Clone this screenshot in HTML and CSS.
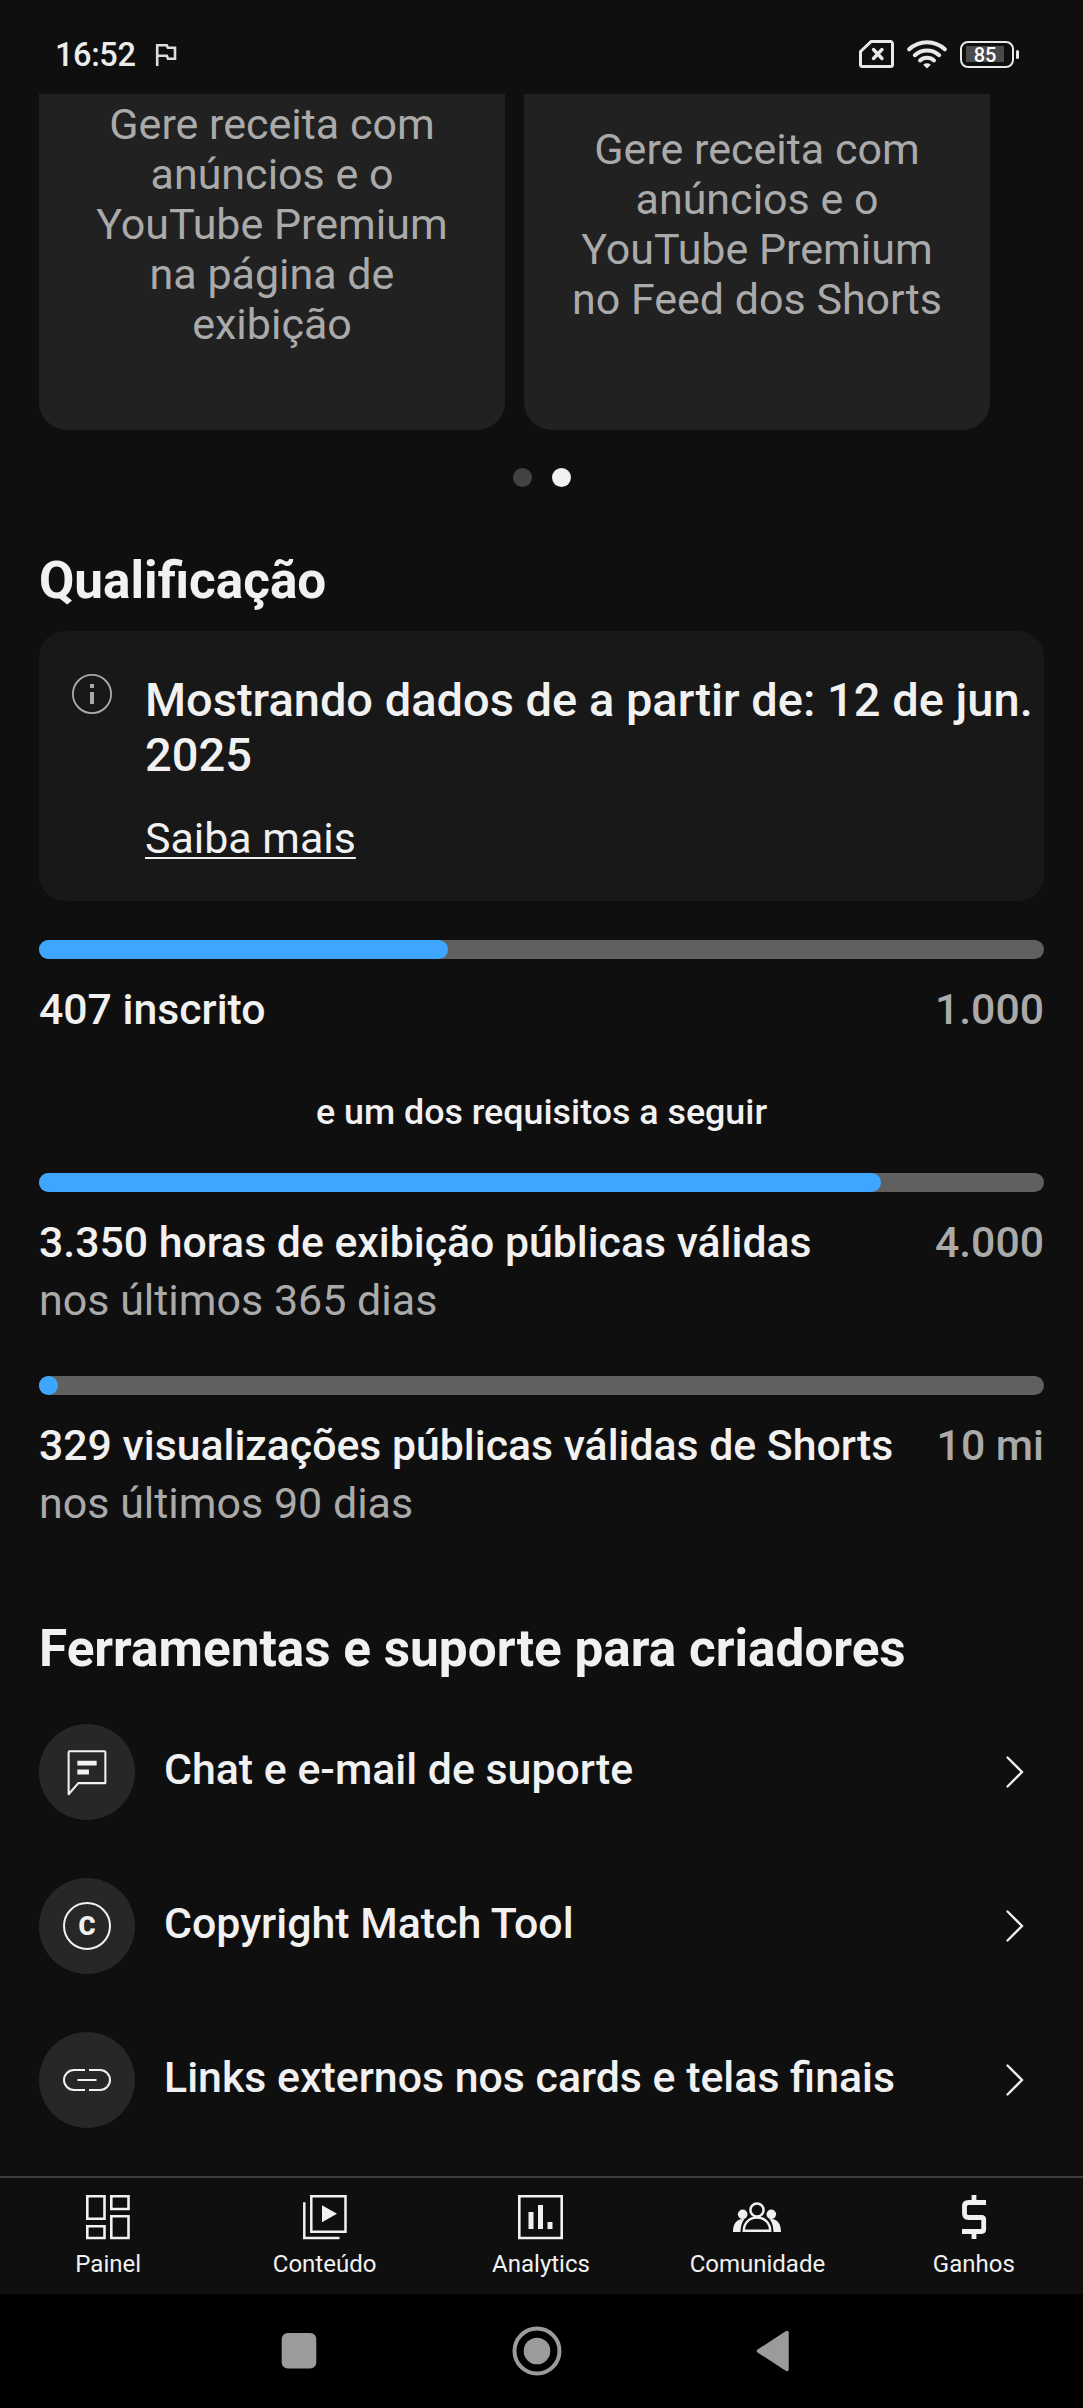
FILE: index.html
```html
<!DOCTYPE html>
<html lang="pt-BR">
<head>
<meta charset="utf-8">
<title>Ganhos</title>
<link rel="stylesheet" href="styles.css">
</head>
<body>
<div class="phone">
  <header class="status">
    <span class="clock">16:52</span>
    <svg class="flag" width="22" height="24" viewBox="0 0 22 24"><path d="M2.200 23V2.200h9.500l1.200 2.600H20v11h-7l-1.200-3H2.200" fill="none" stroke="#ddd" stroke-width="2.600"/></svg>
    <div class="status-right">
      <svg width="35" height="28" viewBox="0 0 35 28"><path d="M12 1.600h19.500a2 2 0 0 1 2 2v20.800a2 2 0 0 1-2 2h-28a2 2 0 0 1-2-2V11.500z" fill="none" stroke="#e8e8e8" stroke-width="3" stroke-linejoin="round"/><path d="M14.500 9.500l8.500 9M23 9.500l-8.500 9" stroke="#e8e8e8" stroke-width="3.400" stroke-linecap="round"/></svg>
      <svg class="wifi" width="40" height="30" viewBox="0 0 40 30" fill="none" stroke="#e8e8e8" stroke-width="4" stroke-linecap="round"><path d="M2.200 10.300a26 26 0 0 1 35.600 0"/><path d="M7.800 16.200a18 18 0 0 1 24.400 0" /><path d="M13 21.500a10.500 10.500 0 0 1 14 0"/><path d="M20 29.500l-3.800-3.800q3.800-2.800 7.600 0z" fill="#e8e8e8" stroke="none"/></svg>
      <div class="battery"><div class="battery-body"><span class="battery-level">85</span></div><i class="battery-tip"></i></div>
    </div>
  </header>

  <main class="content">
    <section class="cards">
      <p class="card">Gere receita com<br>anúncios e o<br>YouTube Premium<br>na página de<br>exibição</p>
      <p class="card card-short">Gere receita com<br>anúncios e o<br>YouTube Premium<br>no Feed dos Shorts</p>
    </section>
    <div class="dots"><i class="dot"></i><i class="dot dot-active"></i></div>

    <h2 class="title">Qualificação</h2>
    <section class="notice">
      <svg class="info" width="40" height="40" viewBox="0 0 40 40"><circle cx="20" cy="20" r="19.100" fill="none" stroke="#aaa" stroke-width="1.800"/><path d="M18 10h4v4h-4zM18 18h4v12h-4z" fill="#aaa"/></svg>
      <div>
        <p class="notice-title">Mostrando dados de a partir de: 12 de jun. 2025</p>
        <a class="notice-link">Saiba mais</a>
      </div>
    </section>

    <section class="goal">
      <div class="bar"><div class="fill" style="width:40.7%"></div></div>
      <div class="goal-row"><span>407 inscrito</span><span class="target">1.000</span></div>
    </section>
    <p class="either">e um dos requisitos a seguir</p>
    <section class="goal">
      <div class="bar"><div class="fill" style="width:83.75%"></div></div>
      <div class="goal-row"><span>3.350 horas de exibição públicas válidas</span><span class="target">4.000</span></div>
      <p class="period">nos últimos 365 dias</p>
    </section>
    <section class="goal goal-next">
      <div class="bar"><div class="fill" style="width:0.003%"></div></div>
      <div class="goal-row"><span>329 visualizações públicas válidas de Shorts</span><span class="target">10 mi</span></div>
      <p class="period">nos últimos 90 dias</p>
    </section>

    <h2 class="title title-tools">Ferramentas e suporte para criadores</h2>
    <ul class="tools">
      <li class="tool">
        <span class="disc"><svg width="58" height="58" viewBox="0 0 24 24" fill="none" stroke="#f1f1f1" stroke-width=".85"><path d="M4.400 21.200V3.800q0-.4.400-.4h14.400q.4 0 .4.400v12.800H8.400z" stroke-linejoin="round"/><path d="M8 8.300h8M8 12h4.800" stroke-width="2"/></svg></span>
        <span class="tool-name">Chat e e-mail de suporte</span>
        <svg class="chevron" width="18" height="32" viewBox="0 0 18 32"><path d="M1.500 1.500L16 16 1.500 30.500"/></svg>
      </li>
      <li class="tool">
        <span class="disc"><span class="copyright">C</span></span>
        <span class="tool-name">Copyright Match Tool</span>
        <svg class="chevron" width="18" height="32" viewBox="0 0 18 32"><path d="M1.500 1.500L16 16 1.500 30.500"/></svg>
      </li>
      <li class="tool">
        <span class="disc"><svg width="48" height="22" viewBox="0 0 48 22" fill="none" stroke="#f1f1f1" stroke-width="2"><path d="M22 1H11a10 10 0 0 0 0 20h11M26 1h11a10 10 0 0 1 0 20H26M14.500 11h19"/></svg></span>
        <span class="tool-name">Links externos nos cards e telas finais</span>
        <svg class="chevron" width="18" height="32" viewBox="0 0 18 32"><path d="M1.500 1.500L16 16 1.500 30.500"/></svg>
      </li>
    </ul>
  </main>

  <nav class="tabs">
    <a class="tab"><svg width="48" height="46" viewBox="0 0 48 46" fill="none" stroke="#f1f1f1" stroke-width="2.600"><path d="M3.300 2.300h17.200v22.400H3.300zM27.300 2.300h17.200v12.700H27.300zM3.300 32.300h17.200v11.700H3.300zM27.300 22.300h17.200v21.700H27.300z"/></svg><span>Painel</span></a>
    <a class="tab"><svg width="48" height="46" viewBox="0 0 48 46" fill="none" stroke="#f1f1f1" stroke-width="2.500"><path d="M10.300 2.300h34.200v35.400H10.300zM3.300 8.200V44h35.200"/><path d="M21 11.200v17l15-8.500z" fill="#f1f1f1" stroke="none"/></svg><span>Conteúdo</span></a>
    <a class="tab"><svg width="48" height="46" viewBox="0 0 48 46"><path d="M2.300 2.300h42.400v41.700H2.300z" fill="none" stroke="#f1f1f1" stroke-width="2.600"/><path d="M11.500 18h5v17h-5zM21 11h5v24h-5zM30.500 28h5v7h-5z" fill="#f1f1f1"/></svg><span>Analytics</span></a>
    <a class="tab"><svg width="48" height="46" viewBox="0 0 48 46" fill="#f1f1f1"><circle cx="24" cy="16" r="6.600" fill="none" stroke="#f1f1f1" stroke-width="2.500"/><path d="M10.800 36.700c0-8 6-13.200 13.200-13.200s13.200 5.200 13.200 13.200z" fill="none" stroke="#f1f1f1" stroke-width="2.400"/><circle cx="9.700" cy="20.300" r="4.800"/><circle cx="38.300" cy="20.300" r="4.800"/><path d="M0 38c0-7.500 3-13 10-13h1.500C8.800 28.500 7.800 32 7.500 38zM48 38c0-7.500-3-13-10-13h-1.500c2.700 3.500 3.700 7 4 13z"/></svg><span>Comunidade</span></a>
    <a class="tab"><svg width="48" height="46" viewBox="0 0 48 46" fill="none" stroke="#f1f1f1" stroke-width="4.800"><path d="M36 8.500H18.500q-4 0-4 4v7q0 4 4 4h13q2.200 0 2.200 2.200v9.600q0 2.200-2.200 2.200H12M24 1v7M24 37.500V45"/></svg><span>Ganhos</span></a>
  </nav>

  <footer class="system">
    <svg width="36" height="50" viewBox="0 0 36 50"><rect x=".7" y="7" width="34.600" height="35.500" rx="6" fill="#9b9b9b"/></svg>
    <svg width="50" height="50" viewBox="0 0 50 50"><circle cx="25" cy="25" r="22.500" fill="none" stroke="#9b9b9b" stroke-width="4"/><circle cx="25" cy="25" r="13.300" fill="#9b9b9b"/></svg>
    <svg width="34" height="50" viewBox="0 0 34 50"><path d="M2.500 25L31 6.500v37z" fill="#9b9b9b" stroke="#9b9b9b" stroke-width="3.500" stroke-linejoin="round"/></svg>
  </footer>
</div>
</body>
</html>
```
FILE: styles.css
```css
* { box-sizing: border-box; }
body, p, h2, ul { margin: 0; padding: 0; }
body { background: #0f0f0f; color: #f1f1f1; font-family: Roboto, sans-serif; }
svg { display: block; flex: none; }
.phone { width: 1083px; height: 2408px; display: flex; flex-direction: column; overflow: hidden; }

.status { height: 94px; padding: 15px 63px 0 55px; display: flex; align-items: center; flex: none; }
.clock { font-size: 32.500px; line-height: 40px; font-weight: 500; letter-spacing: -.4px; color: #ececec; }
.flag { margin-left: 20px; }
.status-right { margin-left: auto; display: flex; align-items: center; gap: 13px; padding: 0 1px 1px 0; }
.battery { display: flex; align-items: center; gap: 2px; }
.battery-body { width: 54px; height: 27px; border: 2.5px solid #e8e8e8; border-radius: 8px; padding: 3px 8px 3px 4px; }
.battery-level { display: block; height: 16px; background: #4a4a4a; font-size: 20px; line-height: 18px; font-weight: 500; text-align: center; color: #fff; }
.battery-tip { width: 3px; height: 9px; border-radius: 2px; background: #e8e8e8; }

.content { flex: 1; padding: 0 39px; }
.cards { display: flex; gap: 19px; }
.card { width: 466px; height: 336px; padding-top: 5px; border-radius: 0 0 28px 28px; background: #212121; color: #aaa; font-size: 43px; line-height: 50px; text-align: center; }
.card-short { padding-top: 30px; }
.dots { display: flex; justify-content: center; gap: 20px; margin-top: 38px; }
.dot { width: 19px; height: 19px; border-radius: 50%; background: #424242; }
.dot-active { background: #f1f1f1; }

.title { margin-top: 64px; font-size: 51.300px; line-height: 60px; font-weight: 700; }
.title-tools { margin-top: 91px; }
.notice { margin-top: 20px; height: 270px; padding: 41px 0 0 33px; display: flex; gap: 33px; border-radius: 26px; background: #181818; }
.info { margin-top: 2px; }
.notice-title { font-size: 47px; line-height: 55px; font-weight: 500; }
.notice-link { display: block; margin-top: 31px; font-size: 42.900px; line-height: 50px; text-decoration: underline; text-decoration-thickness: 2px; text-underline-offset: 4px; }

.goal { margin-top: 39px; }
.goal-next { margin-top: 51px; }
.bar { height: 19px; border-radius: 10px; background: #606060; }
.fill { height: 19px; min-width: 19px; border-radius: 10px; background: #3ea6ff; }
.goal-row { margin-top: 25px; display: flex; justify-content: space-between; font-size: 42.780px; line-height: 50px; font-weight: 500; }
.target { color: #aaa; }
.period { margin-top: 8px; font-size: 43px; line-height: 50px; color: #aaa; }
.either { margin-top: 56px; font-size: 35.800px; line-height: 44px; font-weight: 500; text-align: center; }

.tools { margin-top: 45px; display: grid; gap: 58px; list-style: none; }
.tool { height: 96px; display: flex; align-items: center; padding-right: 20px; }
.disc { width: 96px; height: 96px; border-radius: 50%; background: #272727; display: flex; align-items: center; justify-content: center; }
.copyright { width: 48px; height: 48px; border: 2px solid #f1f1f1; border-radius: 50%; font-size: 26px; line-height: 44px; font-weight: 900; text-align: center; }
.tool-name { margin-left: 29px; padding-bottom: 7px; font-size: 42.850px; line-height: 50px; font-weight: 500; }
.chevron { margin-left: auto; fill: none; stroke: #f1f1f1; stroke-width: 2.3; stroke-linecap: round; }

.tabs { flex: none; height: 118px; border-top: 2px solid #3f3f3f; padding-right: 1px; display: grid; grid-template-columns: repeat(5, 1fr); }
.tab { display: flex; flex-direction: column; align-items: center; padding-top: 16px; gap: 10px; font-size: 24px; line-height: 28px; }
.system { flex: none; height: 114px; background: #000; display: flex; justify-content: space-between; align-items: center; padding: 0 293px 0 281px; }
```
